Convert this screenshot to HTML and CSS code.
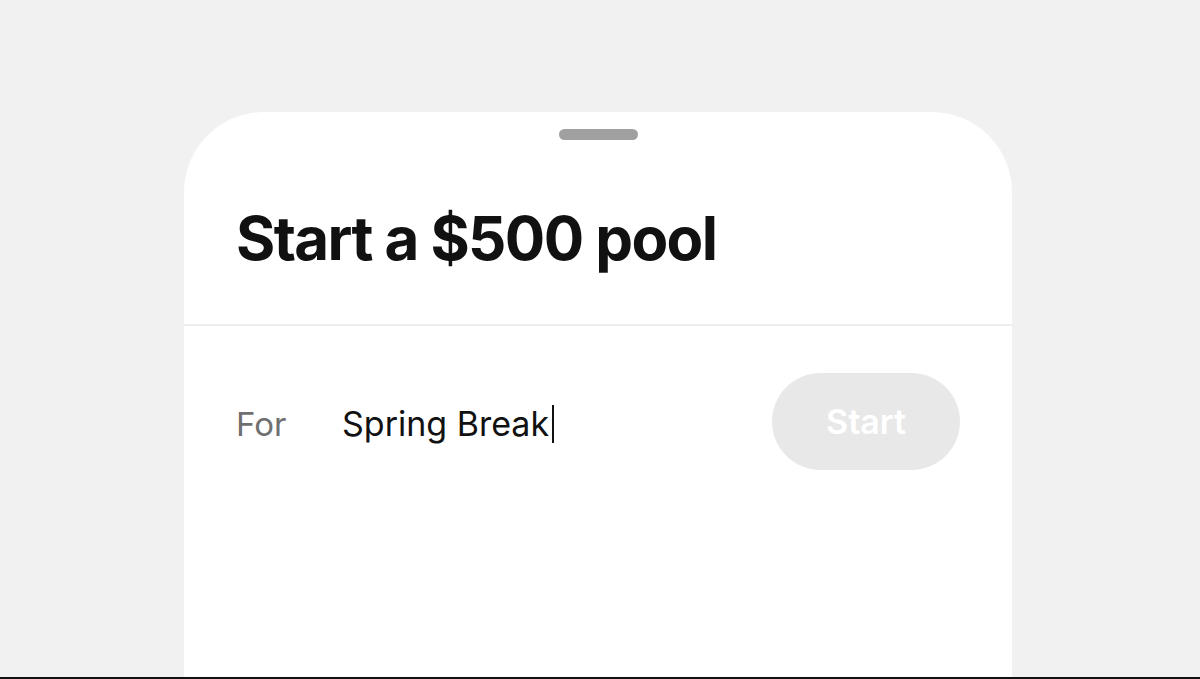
FILE: index.html
```html
<!DOCTYPE html>
<html>
<head>
<meta charset="utf-8">
<link rel="stylesheet" href="styles.css">
</head>
<body>
<div class="stage">
  <div class="sheet">
    <div class="sheet-head">
      <div class="handle"></div>
      <h1 class="title">Start a $500 pool</h1>
    </div>
    <div class="divider"></div>
    <div class="row">
      <span class="label">For</span>
      <span class="value">Spring Break<span class="caret"></span></span>
      <button class="start">Start</button>
    </div>
  </div>
</div>
<div class="bottom-line"></div>
</body>
</html>
```
FILE: styles.css
```css
html, body {
  margin: 0;
  padding: 0;
}
body {
  width: 1200px;
  height: 679px;
  background: #f1f1f1;
  display: flex;
  flex-direction: column;
  overflow: hidden;
  font-family: Inter, "Liberation Sans", sans-serif;
}
.stage {
  flex: 1;
  display: flex;
  padding-top: 112px;
  padding-left: 184px;
}
.sheet {
  width: 828px;
  background: #ffffff;
  border-radius: 80px 80px 0 0;
  display: flex;
  flex-direction: column;
}
.sheet-head {
  display: flex;
  flex-direction: column;
  align-items: center;
  padding-top: 17px;
  height: 195px;
}
.handle {
  width: 79px;
  height: 11px;
  border-radius: 6px;
  background: #a0a0a0;
}
.title {
  align-self: flex-start;
  margin: 62px 0 0 52px;
  font-size: 60px;
  line-height: 72px;
  font-weight: 650;
  letter-spacing: -1.6px;
  color: #111111;
}
.divider {
  height: 2px;
  background: #ededed;
}
.row {
  display: flex;
  align-items: center;
  padding: 47px 52px 0 52px;
}
.label {
  width: 106px;
  font-size: 33px;
  color: #6f6f6f;
  padding-top: 4px;
}
.value {
  flex: 1;
  display: flex;
  align-items: center;
  font-size: 34px;
  color: #111111;
  letter-spacing: 0;
  padding-top: 4px;
}
.caret {
  display: inline-block;
  width: 2px;
  height: 38px;
  margin-left: 3px;
  background: #111111;
}
.start {
  width: 188px;
  height: 97px;
  border: none;
  border-radius: 49px;
  background: #e8e8e8;
  color: #ffffff;
  font-family: Inter, "Liberation Sans", sans-serif;
  font-size: 34px;
  font-weight: 600;
  padding: 0;
}
.bottom-line {
  height: 2px;
  background: #111111;
}
```
